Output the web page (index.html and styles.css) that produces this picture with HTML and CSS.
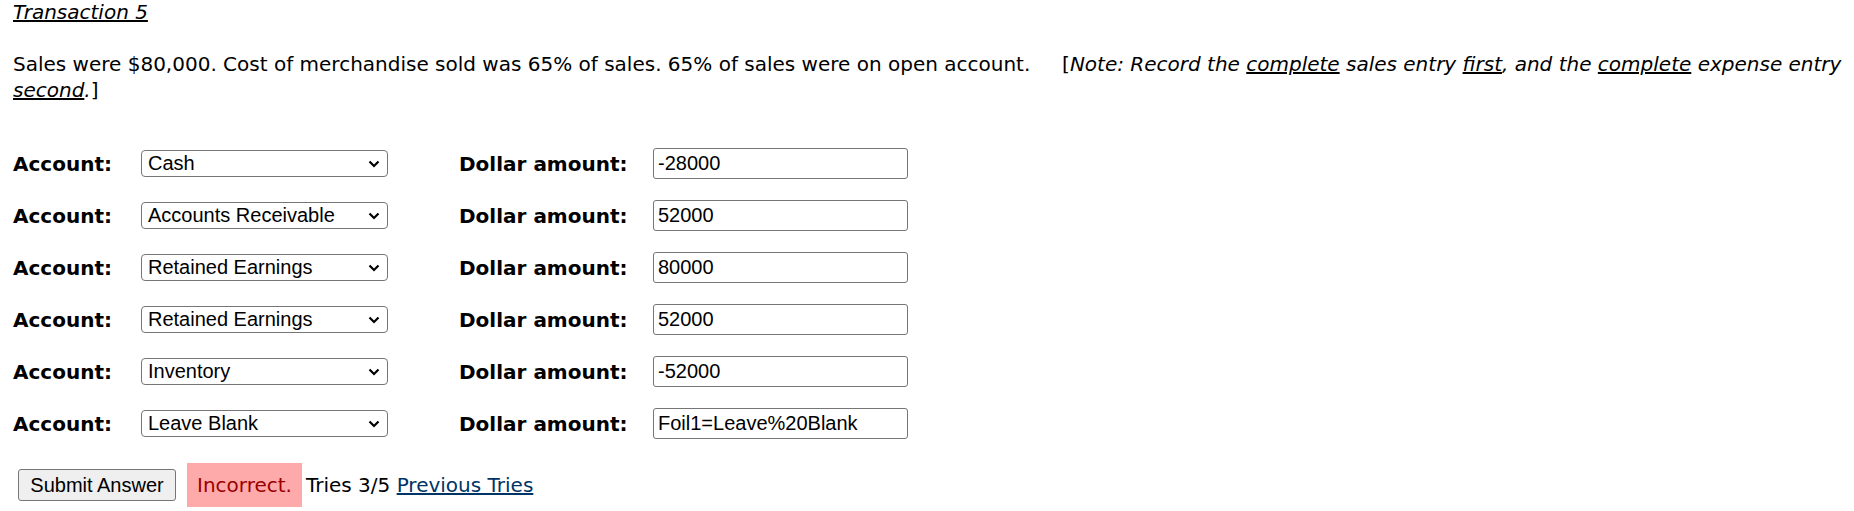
FILE: index.html
```html
<!DOCTYPE html>
<html>
<head>
<meta charset="utf-8">
<link rel="stylesheet" href="styles.css">
</head>
<body>
<p class="title"><i><u>Transaction 5</u></i></p>
<p class="prompt">Sales were $80,000. Cost of merchandise sold was 65% of sales. 65% of sales were on open account.&nbsp;&nbsp;&nbsp;&nbsp; [<i>Note: Record the <u>complete</u> sales entry <u>first</u>, and the <u>complete</u> expense entry <u>second</u>.</i>]</p>
<div class="entries">
  <b class="lbl">Account:</b>
  <div class="cell"><select class="acct"><option>Cash</option></select><svg class="chev" width="12" height="8" viewBox="0 0 12 8"><path d="M1.5 1.5 L6 6 L10.5 1.5" fill="none" stroke="#000" stroke-width="2.2"/></svg></div>
  <b class="lbl">Dollar amount:</b>
  <input class="amt" type="text" value="-28000">

  <b class="lbl">Account:</b>
  <div class="cell"><select class="acct"><option>Accounts Receivable</option></select><svg class="chev" width="12" height="8" viewBox="0 0 12 8"><path d="M1.5 1.5 L6 6 L10.5 1.5" fill="none" stroke="#000" stroke-width="2.2"/></svg></div>
  <b class="lbl">Dollar amount:</b>
  <input class="amt" type="text" value="52000">

  <b class="lbl">Account:</b>
  <div class="cell"><select class="acct"><option>Retained Earnings</option></select><svg class="chev" width="12" height="8" viewBox="0 0 12 8"><path d="M1.5 1.5 L6 6 L10.5 1.5" fill="none" stroke="#000" stroke-width="2.2"/></svg></div>
  <b class="lbl">Dollar amount:</b>
  <input class="amt" type="text" value="80000">

  <b class="lbl">Account:</b>
  <div class="cell"><select class="acct"><option>Retained Earnings</option></select><svg class="chev" width="12" height="8" viewBox="0 0 12 8"><path d="M1.5 1.5 L6 6 L10.5 1.5" fill="none" stroke="#000" stroke-width="2.2"/></svg></div>
  <b class="lbl">Dollar amount:</b>
  <input class="amt" type="text" value="52000">

  <b class="lbl">Account:</b>
  <div class="cell"><select class="acct"><option>Inventory</option></select><svg class="chev" width="12" height="8" viewBox="0 0 12 8"><path d="M1.5 1.5 L6 6 L10.5 1.5" fill="none" stroke="#000" stroke-width="2.2"/></svg></div>
  <b class="lbl">Dollar amount:</b>
  <input class="amt" type="text" value="-52000">

  <b class="lbl">Account:</b>
  <div class="cell"><select class="acct"><option>Leave Blank</option></select><svg class="chev" width="12" height="8" viewBox="0 0 12 8"><path d="M1.5 1.5 L6 6 L10.5 1.5" fill="none" stroke="#000" stroke-width="2.2"/></svg></div>
  <b class="lbl">Dollar amount:</b>
  <input class="amt" type="text" value="Foil1=Leave%20Blank">
</div>
<div class="submit-row">
  <button class="submit" type="button">Submit Answer</button>
  <span class="incorrect">Incorrect.</span>
  <span class="tries">Tries 3/5 <a href="#" class="prev">Previous Tries</a></span>
</div>
</body>
</html>
```

FILE: styles.css
```css
html, body {
  margin: 0;
  padding: 0;
  background: #ffffff;
}
body {
  padding: 0 0 0 13px;
  font-family: "DejaVu Sans", Verdana, sans-serif;
  font-size: 20px;
  color: #000000;
}
.title {
  margin: 0;
  line-height: 24px;
}
.prompt {
  margin: 27px 0 0 0;
  line-height: 26px;
}
.entries {
  margin-top: 45px;
  display: grid;
  grid-template-columns: 128px 318px 194px 255px;
  grid-auto-rows: 31px;
  row-gap: 21px;
  align-items: center;
}
.lbl {
  font-weight: bold;
  line-height: 24px;
}
.cell {
  position: relative;
  display: flex;
  align-items: center;
  width: 247px;
}
.acct {
  -webkit-appearance: none;
  appearance: none;
  box-sizing: border-box;
  width: 247px;
  height: 27px;
  font-family: "Liberation Sans", Arial, sans-serif;
  font-size: 20px;
  line-height: 25px;
  color: #000;
  background: #fff;
  border: 1px solid #767676;
  border-radius: 4px;
  padding: 0 24px 0 6px;
  margin: 0;
}
.chev {
  position: absolute;
  right: 8px;
  top: 10px;
  pointer-events: none;
}
.amt {
  box-sizing: border-box;
  width: 255px;
  height: 31px;
  font-family: "Liberation Sans", Arial, sans-serif;
  font-size: 20px;
  color: #000;
  border: 1px solid #767676;
  border-radius: 3px;
  padding: 0 4px;
  margin: 0;
}
.submit-row {
  margin-top: 24px;
  display: flex;
  align-items: center;
}
.submit {
  box-sizing: border-box;
  margin-left: 5px;
  height: 32px;
  width: 158px;
  padding: 0;
  font-family: "Liberation Sans", Arial, sans-serif;
  font-size: 20px;
  color: #000;
  background: #efefef;
  border: 1px solid #767676;
  border-radius: 3px;
}
.incorrect {
  margin-left: 11px;
  padding: 10px 10px;
  line-height: 24px;
  background: #ffaaaa;
  color: #990000;
}
.tries {
  margin-left: 4px;
  line-height: 24px;
}
.prev {
  color: #003366;
  text-decoration: underline;
}
```
